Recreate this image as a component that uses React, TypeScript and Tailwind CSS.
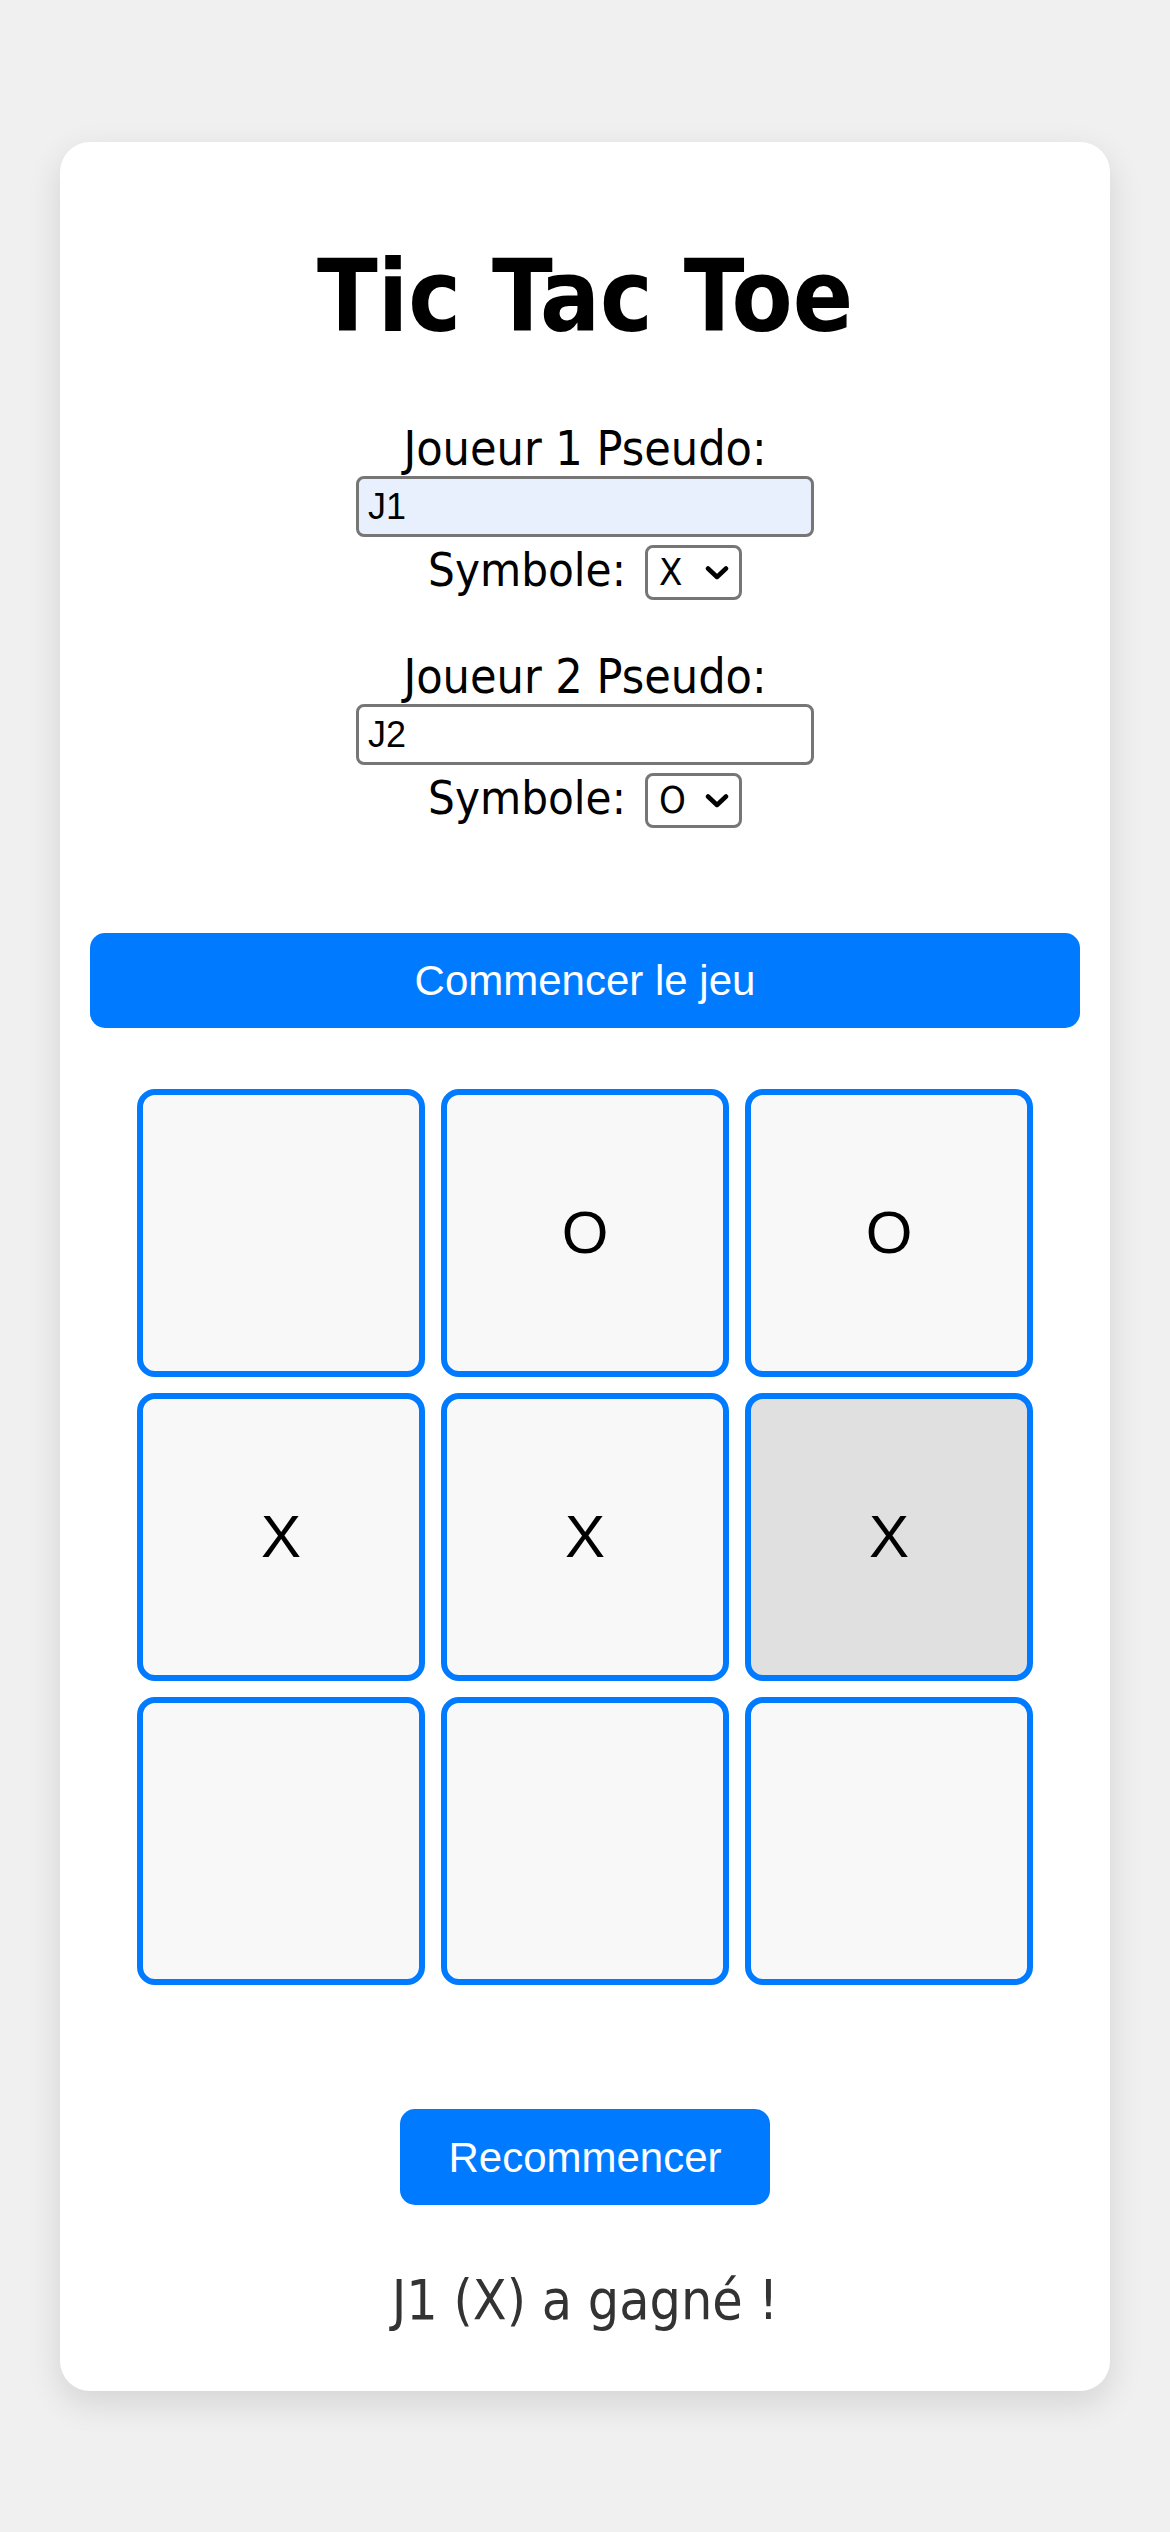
const cells = ['', 'O', 'O', 'X', 'X', 'X', '', '', ''];
const winningCell = 5;

function Chevron() {
  return (
    <svg
      className="pointer-events-none absolute right-[13px] top-1/2 h-[16px] w-[24px] -translate-y-1/2"
      viewBox="0 0 24 16"
      fill="none"
    >
      <path d="M3 3.5 L12 12 L21 3.5" stroke="#000" strokeWidth="4.5" strokeLinecap="round" strokeLinejoin="round" />
    </svg>
  );
}

function PlayerSetup({
  className,
  label,
  name,
  symbol,
  autofill,
}: {
  className: string;
  label: string;
  name: string;
  symbol: string;
  autofill?: boolean;
}) {
  return (
    <div className={`flex flex-col items-center ${className}`}>
      <label className="text-[48px] leading-[55px] text-black">{label}</label>
      <input
        type="text"
        defaultValue={name}
        className={`h-[61px] w-[458px] rounded-[8px] border-[3px] border-[#767676] px-[9px] text-[36px] text-black outline-none [font-family:'Liberation_Sans',Arial,sans-serif] ${
          autofill ? 'bg-[#e8f0fe]' : 'bg-white'
        }`}
      />
      <div className="mt-[8px] flex h-[55px] items-start gap-[19px]">
        <span className="text-[47px] leading-[49px] text-black">Symbole:</span>
        <div className="relative h-[55px] w-[97px]">
          <select
            defaultValue={symbol}
            className="h-full w-full appearance-none rounded-[8px] border-[3px] border-[#767676] bg-white py-0 pl-[11px] text-[38px] leading-[47px] text-black outline-none"
          >
            <option value="X">X</option>
            <option value="O">O</option>
          </select>
          <Chevron />
        </div>
      </div>
    </div>
  );
}

export default function App() {
  return (
    <div className="min-h-screen bg-[#f0f0f0] pt-[142px] pb-[141px] [font-family:'DejaVu_Sans_Condensed','DejaVu_Sans',sans-serif]">
      <div className="mx-auto w-[1050px] rounded-[30px] bg-white px-[30px] pt-[97px] pb-[58px] text-center shadow-[0_12px_34px_rgba(0,0,0,0.12)]">
        <h1 className="text-[99px] font-bold leading-[116px] text-black">Tic Tac Toe</h1>

        <PlayerSetup className="mt-[66px]" label="Joueur 1 Pseudo:" name="J1" symbol="X" autofill />
        <PlayerSetup className="mt-[49px]" label="Joueur 2 Pseudo:" name="J2" symbol="O" />

        <button className="mt-[105px] h-[95px] w-full rounded-[15px] bg-[#007bff] text-[42px] text-white [font-family:'Liberation_Sans',Arial,sans-serif]">
          Commencer le jeu
        </button>

        <div className="mx-auto mt-[61px] grid w-[896px] grid-cols-3 gap-[16px]">
          {cells.map((c, i) => (
            <button
              key={i}
              className={`flex h-[288px] items-center justify-center rounded-[18px] border-[6px] border-[#007bff] text-[60px] text-black [font-family:'Liberation_Sans',Arial,sans-serif] ${
                i === winningCell ? 'bg-[#e0e0e0]' : 'bg-[#f8f8f8]'
              }`}
            >
              {c}
            </button>
          ))}
        </div>

        <button className="mt-[124px] h-[96px] rounded-[15px] bg-[#007bff] px-[48px] text-[42px] text-white [font-family:'Liberation_Sans',Arial,sans-serif]">
          Recommencer
        </button>

        <p className="mt-[62px] text-[55px] leading-[66px] text-[#333]">J1 (X) a gagné !</p>
      </div>
    </div>
  );
}
